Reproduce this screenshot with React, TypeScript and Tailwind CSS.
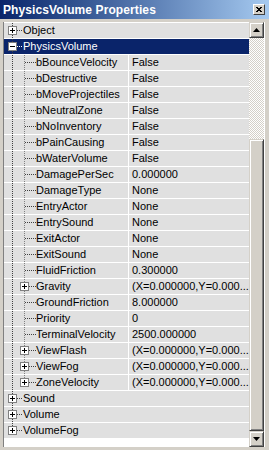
import React from "react"

type Row = {
  name: string
  value?: string
  level: 0 | 1
  expander?: "plus" | "minus"
  selected?: boolean
}

const VEC = "(X=0.000000,Y=0.000..."

const rows: Row[] = [
  { name: "Object", level: 0, expander: "plus" },
  { name: "PhysicsVolume", level: 0, expander: "minus", selected: true },
  { name: "bBounceVelocity", value: "False", level: 1 },
  { name: "bDestructive", value: "False", level: 1 },
  { name: "bMoveProjectiles", value: "False", level: 1 },
  { name: "bNeutralZone", value: "False", level: 1 },
  { name: "bNoInventory", value: "False", level: 1 },
  { name: "bPainCausing", value: "False", level: 1 },
  { name: "bWaterVolume", value: "False", level: 1 },
  { name: "DamagePerSec", value: "0.000000", level: 1 },
  { name: "DamageType", value: "None", level: 1 },
  { name: "EntryActor", value: "None", level: 1 },
  { name: "EntrySound", value: "None", level: 1 },
  { name: "ExitActor", value: "None", level: 1 },
  { name: "ExitSound", value: "None", level: 1 },
  { name: "FluidFriction", value: "0.300000", level: 1 },
  { name: "Gravity", value: VEC, level: 1, expander: "plus" },
  { name: "GroundFriction", value: "8.000000", level: 1 },
  { name: "Priority", value: "0", level: 1 },
  { name: "TerminalVelocity", value: "2500.000000", level: 1 },
  { name: "ViewFlash", value: VEC, level: 1, expander: "plus" },
  { name: "ViewFog", value: VEC, level: 1, expander: "plus" },
  { name: "ZoneVelocity", value: VEC, level: 1, expander: "plus" },
  { name: "Sound", level: 0, expander: "plus" },
  { name: "Volume", level: 0, expander: "plus" },
  { name: "VolumeFog", level: 0, expander: "plus" },
]

function ExpandBox({ x, kind }: { x: number; kind: "plus" | "minus" }) {
  return (
    <g shapeRendering="crispEdges">
      <rect x={x + 0.5} y={3.5} width={8} height={8} fill="#ffffff" stroke="#808080" />
      <line x1={x + 2} y1={7.5} x2={x + 7} y2={7.5} stroke="#000" />
      {kind === "plus" && <line x1={x + 4.5} y1={5} x2={x + 4.5} y2={10} stroke="#000" />}
    </g>
  )
}

function TreeLines({ row, lastTop, lastChild }: { row: Row; lastTop: boolean; lastChild: boolean }) {
  const w = row.level === 0 ? 18 : 32
  const dot = row.selected ? "#ffffff" : "#404040"
  return (
    <svg width={w} height={15} className="shrink-0" shapeRendering="crispEdges">
      {/* root line */}
      <line x1={8.5} y1={0} x2={8.5} y2={lastTop ? 7.5 : 15} stroke="#404040" strokeDasharray="1 1" />
      {row.level === 0 && (
        <>
          <line x1={13} y1={7.5} x2={18} y2={7.5} stroke={dot} strokeDasharray="1 1" />
          {row.expander && <ExpandBox x={4} kind={row.expander} />}
        </>
      )}
      {row.level === 1 && (
        <>
          <line x1={20.5} y1={0} x2={20.5} y2={lastChild ? 7.5 : 15} stroke="#808080" strokeDasharray="1 1" />
          <line x1={row.expander ? 25 : 21} y1={7.5} x2={32} y2={7.5} stroke="#404040" strokeDasharray="1 1" />
          {row.expander && <ExpandBox x={16} kind={row.expander} />}
        </>
      )}
    </svg>
  )
}

function BtnArrow({ up }: { up?: boolean }) {
  return (
    <div className="h-4 shrink-0 bg-[#d4d0c8] border border-t-[#d4d0c8] border-l-[#d4d0c8] border-r-[#404040] border-b-[#404040] shadow-[inset_1px_1px_#ffffff,inset_-1px_-1px_#808080] flex items-center justify-center">
      <svg width="7" height="4" viewBox="0 0 7 4">
        {up ? <polygon points="3.5,0 7,4 0,4" fill="#000" /> : <polygon points="0,0 7,0 3.5,4" fill="#000" />}
      </svg>
    </div>
  )
}

export default function App() {
  const childRows = rows.filter((r) => r.level === 1)
  const lastChildName = childRows[childRows.length - 1].name
  return (
    <div className="w-[269px] h-[450px] bg-[#d4d0c8] flex flex-col overflow-hidden font-['Liberation_Sans',Arial,sans-serif]">
      <div className="h-[19px] shrink-0 flex items-center justify-between bg-gradient-to-r from-[#0a246a] to-[#a6caf0] pl-[3px] pr-[4px]">
        <span className="text-white font-bold text-[12px] leading-none tracking-[0.1px]">PhysicsVolume Properties</span>
        <div className="w-[12px] h-[11px] bg-[#d4d0c8] border border-t-white border-l-white border-r-[#404040] border-b-[#404040] flex items-center justify-center">
          <svg width="6" height="5" viewBox="0 0 6 5" shapeRendering="crispEdges">
            <path d="M0 0L6 5M6 0L0 5" stroke="#000" strokeWidth="1.2" />
          </svg>
        </div>
      </div>

      <div className="flex-1 flex pl-[3px] pr-[4px] pt-[3px] pb-[3px] min-h-0">
        <div className="flex-1 flex border-l border-[#808080] border-r border-r-white min-h-0">
          <div className="flex-1 bg-white flex flex-col min-w-0 pt-[1px]">
            {rows.map((r, i) => {
              const lastTop = i === rows.length - 1
              return (
                <div
                  key={r.name}
                  className={`h-4 shrink-0 flex border-b border-white text-[11px] leading-[15px] ${
                    r.selected ? "bg-[#0a246a] text-white" : "bg-[#e0e0e0] text-black"
                  }`}
                >
                  <div className="w-[124px] shrink-0 flex items-center overflow-hidden">
                    <TreeLines row={r} lastTop={lastTop} lastChild={r.name === lastChildName} />
                    <span className={`whitespace-nowrap ${r.level === 0 ? "pl-[1px]" : ""}`}>{r.name}</span>
                  </div>
                  {r.level === 1 && (
                    <div className="flex-1 min-w-0 border-l border-white pl-[3px] whitespace-nowrap overflow-hidden">
                      {r.value}
                    </div>
                  )}
                </div>
              )
            })}
          </div>

          <div className="w-[15px] shrink-0 flex flex-col">
            <BtnArrow up />
            <div className="h-[101px] shrink-0 bg-[repeating-conic-gradient(#d4d0c8_0%_25%,#ffffff_0%_50%)] bg-[length:2px_2px]" />
            <div className="flex-1 bg-[#d4d0c8] border border-t-[#d4d0c8] border-l-[#d4d0c8] border-r-[#404040] border-b-[#404040] shadow-[inset_1px_1px_#ffffff,inset_-1px_-1px_#808080]" />
            <BtnArrow />
          </div>
        </div>
      </div>
    </div>
  )
}
